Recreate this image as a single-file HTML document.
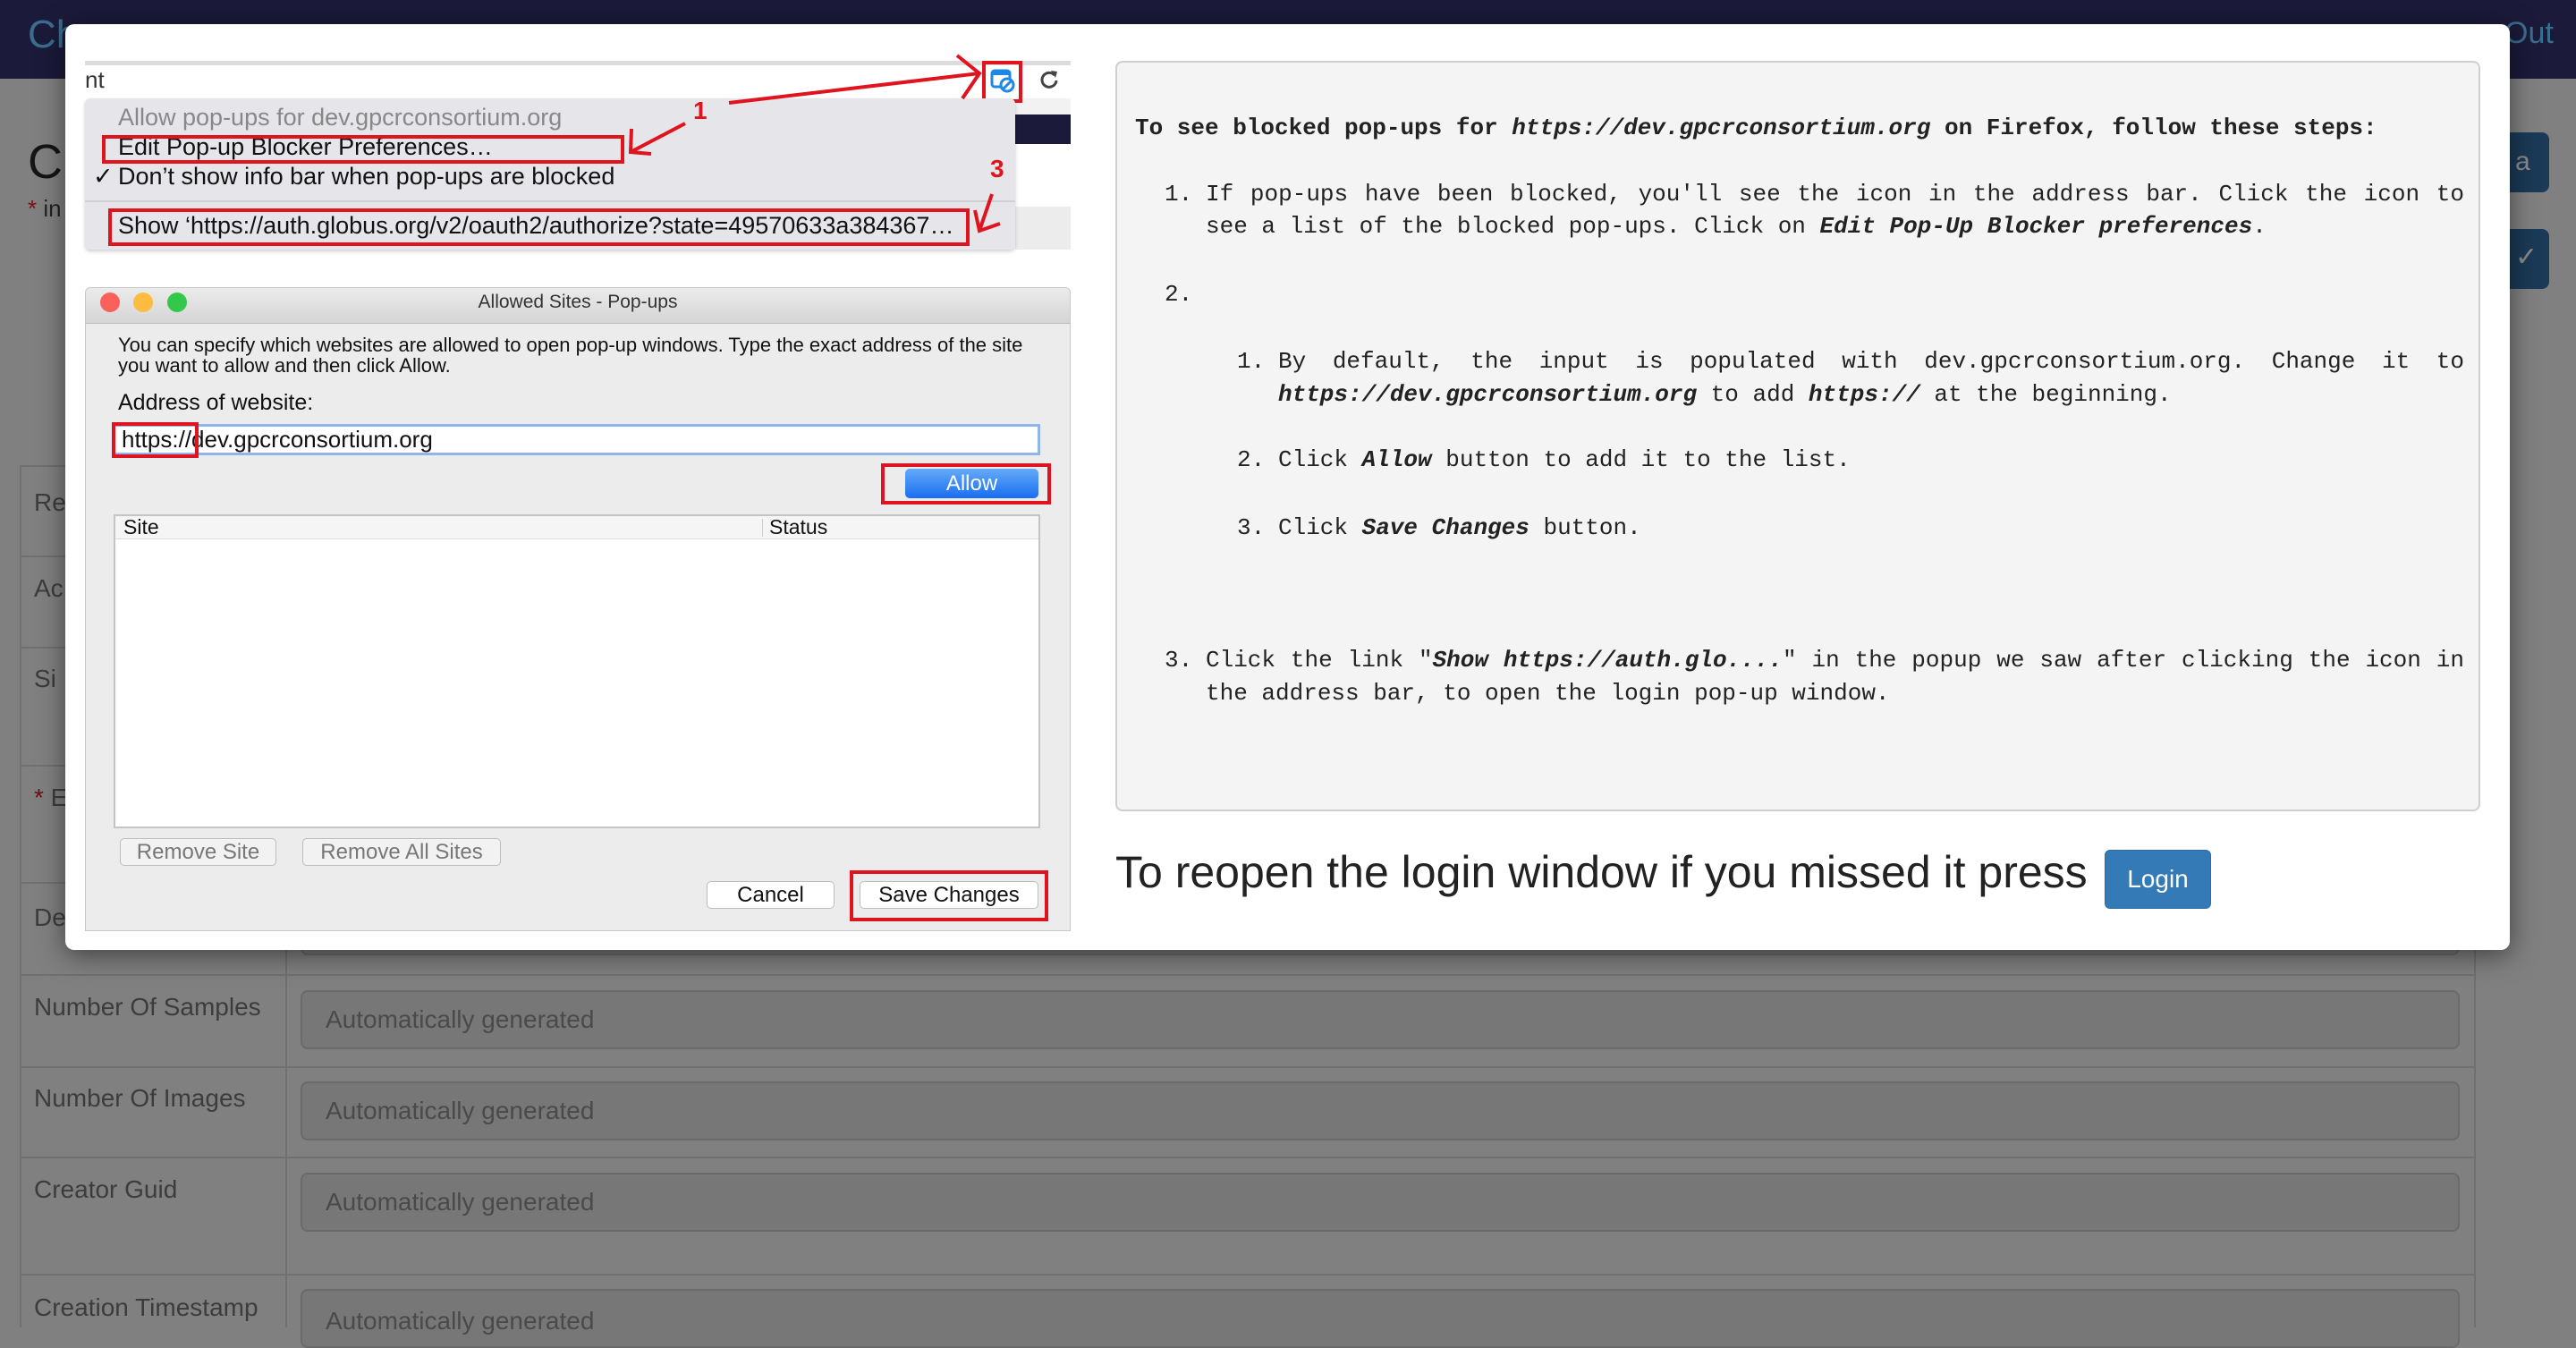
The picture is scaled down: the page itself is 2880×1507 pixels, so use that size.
<!DOCTYPE html>
<html><head><meta charset="utf-8"><style>
*{margin:0;padding:0;box-sizing:border-box}
body{width:2880px;height:1484px;overflow:hidden;background:#808080;font-family:"Liberation Sans",sans-serif;position:relative}
.a{position:absolute}
.nav{left:0;top:0;width:2880px;height:88px;background:#1b1a3a}
.lbl{color:#3c3c3c;font-size:28px}
.inp{background:#777;border:2px solid #6a6a6a;border-radius:8px;color:#4a4a4a;font-size:28px;padding-left:26px;display:flex;align-items:center}
.row{left:22px;width:2746px;border-top:2px solid #707070}
.modal{left:73px;top:27px;width:2733px;height:1035px;background:#fff;border-radius:10px;box-shadow:0 6px 30px rgba(0,0,0,.5)}
.pre{left:1247px;top:68px;width:1526px;height:839px;background:#f4f4f4;border:2px solid #cfcfcf;border-radius:8px}
.m{font-family:"Liberation Mono",monospace;font-size:26px;color:#222;line-height:37px;white-space:nowrap}
.j{text-align:justify;text-align-last:justify;white-space:normal}
.red{color:#e0141e;font-weight:bold;font-size:28px;font-family:"Liberation Sans",sans-serif}
.rb{border:4px solid #e0141e}
.menu{font-size:27px;color:#111}
.btn{background:#fff;border:1px solid #bdbdbd;border-radius:5px;font-size:24px;display:flex;align-items:center;justify-content:center;color:#111}
</style></head><body>
<div class="a nav"></div>
<div class="a" style="left:31px;top:14px;font-size:44px;color:#3b6d8c">Ch</div>
<div class="a" style="left:2800px;top:18px;font-size:34px;color:#3b6d8c">Out</div>
<div class="a" style="left:31px;top:150px;font-size:54px;color:#151515">Cr</div>
<div class="a" style="left:31px;top:218px;font-size:26px;color:#222"><span style="color:#7a1010">*</span> in</div>
<div class="a" style="left:2790px;top:148px;width:60px;height:67px;background:#1b3a57;border-radius:8px;color:#8a8a8a;font-size:30px;padding:16px 0 0 22px">a</div>
<div class="a" style="left:2790px;top:256px;width:60px;height:67px;background:#1b3a57;border-radius:8px;color:#8a8a8a;font-size:30px;padding:14px 0 0 22px">✓</div>

<div class="a" style="left:22px;top:520px;width:2746px;height:964px;border-left:2px solid #707070;border-right:2px solid #707070"></div>
<div class="a" style="left:319px;top:520px;width:2px;height:964px;background:#707070"></div>
<div class="a row" style="top:520px"></div>
<div class="a row" style="top:621px"></div>
<div class="a row" style="top:723px"></div>
<div class="a row" style="top:855px"></div>
<div class="a row" style="top:986px"></div>
<div class="a row" style="top:1089px"></div>
<div class="a row" style="top:1192px"></div>
<div class="a row" style="top:1293px"></div>
<div class="a row" style="top:1424px"></div>
<div class="a lbl" style="left:38px;top:546px">Re</div>
<div class="a lbl" style="left:38px;top:642px">Ac</div>
<div class="a lbl" style="left:38px;top:743px">Si</div>
<div class="a lbl" style="left:38px;top:876px"><span style="color:#6a1010">*</span> E</div>
<div class="a lbl" style="left:38px;top:1010px">De</div>
<div class="a lbl" style="left:38px;top:1110px">Number Of Samples</div>
<div class="a lbl" style="left:38px;top:1212px">Number Of Images</div>
<div class="a lbl" style="left:38px;top:1314px">Creator Guid</div>
<div class="a lbl" style="left:38px;top:1446px">Creation Timestamp</div>
<div class="a inp" style="left:336px;top:1000px;width:2414px;height:68px"></div>
<div class="a inp" style="left:336px;top:1107px;width:2414px;height:66px">Automatically generated</div>
<div class="a inp" style="left:336px;top:1209px;width:2414px;height:66px">Automatically generated</div>
<div class="a inp" style="left:336px;top:1311px;width:2414px;height:66px">Automatically generated</div>
<div class="a inp" style="left:336px;top:1441px;width:2414px;height:66px;align-items:flex-start;padding-top:18px">Automatically generated</div>

<div class="a modal"></div>
<div class="a" style="left:95px;top:68px;width:1102px;height:5px;background:#dcdcdc"></div>
<div class="a" style="left:95px;top:73px;width:1102px;height:37px;background:#fff"></div>
<div class="a" style="left:95px;top:74px;font-size:26px;color:#333">nt</div>
<div class="a" style="left:1135px;top:110px;width:62px;height:18px;background:#f2f2f2"></div>
<div class="a" style="left:1135px;top:128px;width:62px;height:33px;background:#1b1a3a"></div>
<div class="a" style="left:1135px;top:161px;width:62px;height:70px;background:#fff"></div>
<div class="a" style="left:1135px;top:231px;width:62px;height:48px;background:#ececec"></div>
<div class="a rb" style="left:1098px;top:68px;width:45px;height:47px"></div>
<svg class="a" style="left:1106px;top:75px" width="30" height="30" viewBox="0 0 30 30"><rect x="3" y="4" width="20" height="18" rx="3" fill="none" stroke="#1e88e5" stroke-width="3"/><rect x="3" y="4" width="20" height="5" fill="#1e88e5"/><circle cx="20" cy="20" r="7" fill="#fff" stroke="#1e88e5" stroke-width="3"/><line x1="16" y1="24" x2="24" y2="16" stroke="#1e88e5" stroke-width="3"/></svg>
<svg class="a" style="left:1160px;top:76px" width="26" height="26" viewBox="0 0 26 26"><path d="M19 8 A8 8 0 1 0 21 14" fill="none" stroke="#444" stroke-width="3"/><path d="M15 3 L22 4 L20 11 Z" fill="#444"/></svg>
<div class="a" style="left:95px;top:110px;width:1040px;height:169px;background:#e6e6ea;border-radius:6px;box-shadow:0 2px 4px rgba(0,0,0,.2)"></div>
<div class="a menu" style="left:132px;top:116px;color:#888">Allow pop-ups for dev.gpcrconsortium.org</div>
<div class="a menu" style="left:132px;top:149px">Edit Pop-up Blocker Preferences…</div>
<div class="a rb" style="left:114px;top:151px;width:584px;height:32px"></div>
<div class="a menu" style="left:104px;top:182px">✓</div>
<div class="a menu" style="left:132px;top:182px">Don’t show info bar when pop-ups are blocked</div>
<div class="a" style="left:95px;top:224px;width:1040px;height:2px;background:#d0d0d4"></div>
<div class="a menu" style="left:132px;top:237px">Show ‘https://auth.globus.org/v2/oauth2/authorize?state=49570633a384367…</div>
<div class="a rb" style="left:121px;top:233px;width:963px;height:42px"></div>
<svg class="a" style="left:0;top:0" width="1220" height="1100">
<g stroke="#e0141e" stroke-width="4" fill="none">
<line x1="815" y1="115" x2="1095" y2="82"/><polyline points="1070,62 1095,82 1076,110"/>
<line x1="766" y1="138" x2="705" y2="170"/><polyline points="706,144 705,170 728,172"/>
<line x1="1109" y1="217" x2="1095" y2="258"/><polyline points="1090,235 1095,258 1118,250"/>
<line x1="331" y1="443" x2="186" y2="462"/><polyline points="210,447 186,462 212,470"/>
<line x1="825" y1="545" x2="972" y2="545"/><polyline points="952,530 972,545 952,560"/>
<line x1="1080" y1="905" x2="1080" y2="972"/><polyline points="1068,955 1080,972 1092,955"/>
</g></svg>
<div class="a red" style="left:775px;top:108px">1</div>
<div class="a red" style="left:1107px;top:173px">3</div>
<div class="a red" style="left:343px;top:412px;font-size:26px">2.1</div>
<div class="a red" style="left:775px;top:527px;font-size:26px">2.2</div>
<div class="a red" style="left:1050px;top:876px;font-size:26px">2.3</div>

<div class="a" style="left:95px;top:321px;width:1102px;height:720px;background:#ececec;border:1px solid #c8c8c8;border-radius:6px 6px 0 0"></div>
<div class="a" style="left:96px;top:322px;width:1100px;height:40px;background:linear-gradient(#ebebeb,#d5d5d5);border-bottom:1px solid #bdbdbd;border-radius:6px 6px 0 0"></div>
<div class="a" style="left:112px;top:327px;width:22px;height:22px;border-radius:50%;background:#fc605b"></div>
<div class="a" style="left:149px;top:327px;width:22px;height:22px;border-radius:50%;background:#fdbc40"></div>
<div class="a" style="left:187px;top:327px;width:22px;height:22px;border-radius:50%;background:#34c84a"></div>
<div class="a" style="left:96px;top:326px;width:1100px;text-align:center;font-size:21px;color:#333">Allowed Sites - Pop-ups</div>
<div class="a" style="left:132px;top:374px;font-size:22px;color:#111;line-height:23px;width:1040px;white-space:nowrap">You can specify which websites are allowed to open pop-up windows. Type the exact address of the site<br>you want to allow and then click Allow.</div>
<div class="a" style="left:132px;top:436px;font-size:25px;color:#111">Address of website:</div>
<div class="a" style="left:125px;top:474px;width:1038px;height:35px;background:#fff;border:3px solid #8fb5ec"></div>
<div class="a" style="left:136px;top:476px;font-size:26px;color:#111">https://dev.gpcrconsortium.org</div>
<div class="a rb" style="left:125px;top:472px;width:97px;height:40px"></div>
<div class="a rb" style="left:985px;top:518px;width:190px;height:46px"></div>
<div class="a" style="left:1012px;top:524px;width:149px;height:33px;background:linear-gradient(#64aaf9,#1a6ef0);border-radius:5px;color:#fff;font-size:24px;display:flex;align-items:center;justify-content:center">Allow</div>
<div class="a" style="left:127px;top:575px;width:1036px;height:351px;background:#fff;border:2px solid #c4c4c4"></div>
<div class="a" style="left:129px;top:577px;width:1032px;height:26px;background:#f5f5f5;border-bottom:1px solid #ddd"></div>
<div class="a" style="left:852px;top:580px;width:1px;height:20px;background:#ccc"></div>
<div class="a" style="left:138px;top:576px;font-size:23px;color:#111">Site</div>
<div class="a" style="left:860px;top:576px;font-size:23px;color:#111">Status</div>
<div class="a btn" style="left:134px;top:937px;width:175px;height:31px;color:#777;background:#f2f2f2">Remove Site</div>
<div class="a btn" style="left:338px;top:937px;width:222px;height:31px;color:#777;background:#f2f2f2">Remove All Sites</div>
<div class="a btn" style="left:790px;top:985px;width:143px;height:31px">Cancel</div>
<div class="a btn" style="left:961px;top:985px;width:200px;height:31px">Save Changes</div>
<div class="a rb" style="left:950px;top:973px;width:222px;height:57px"></div>

<div class="a pre"></div>
<div class="a m" style="left:1269px;top:125px;font-weight:bold">To see blocked pop-ups for <i>https://dev.gpcrconsortium.org</i> on Firefox, follow these steps:</div>
<div class="a m" style="left:1302px;top:199px">1.</div>
<div class="a m j" style="left:1348px;top:199px;width:1407px">If pop-ups have been blocked, you'll see the icon in the address bar. Click the icon to</div>
<div class="a m" style="left:1348px;top:235px">see a list of the blocked pop-ups. Click on <b><i>Edit Pop-Up Blocker preferences</i></b>.</div>
<div class="a m" style="left:1302px;top:311px">2.</div>
<div class="a m" style="left:1383px;top:386px">1.</div>
<div class="a m j" style="left:1429px;top:386px;width:1326px">By default, the input is populated with dev.gpcrconsortium.org. Change it to</div>
<div class="a m" style="left:1429px;top:423px"><b><i>https://dev.gpcrconsortium.org</i></b> to add <b><i>https://</i></b> at the beginning.</div>
<div class="a m" style="left:1383px;top:496px">2.</div>
<div class="a m" style="left:1429px;top:496px">Click <b><i>Allow</i></b> button to add it to the list.</div>
<div class="a m" style="left:1383px;top:572px">3.</div>
<div class="a m" style="left:1429px;top:572px">Click <b><i>Save Changes</i></b> button.</div>
<div class="a m" style="left:1302px;top:720px">3.</div>
<div class="a m j" style="left:1348px;top:720px;width:1407px">Click the link "<b><i>Show https://auth.glo....</i></b>" in the popup we saw after clicking the icon in</div>
<div class="a m" style="left:1348px;top:757px">the address bar, to open the login pop-up window.</div>

<div class="a" style="left:1247px;top:946px;font-size:50px;color:#222;white-space:nowrap">To reopen the login window if you missed it press</div>
<div class="a" style="left:2353px;top:950px;width:119px;height:66px;background:#337ab7;border:1px solid #2e6da4;border-radius:6px;color:#fff;font-size:28px;display:flex;align-items:center;justify-content:center">Login</div>
</body></html>
